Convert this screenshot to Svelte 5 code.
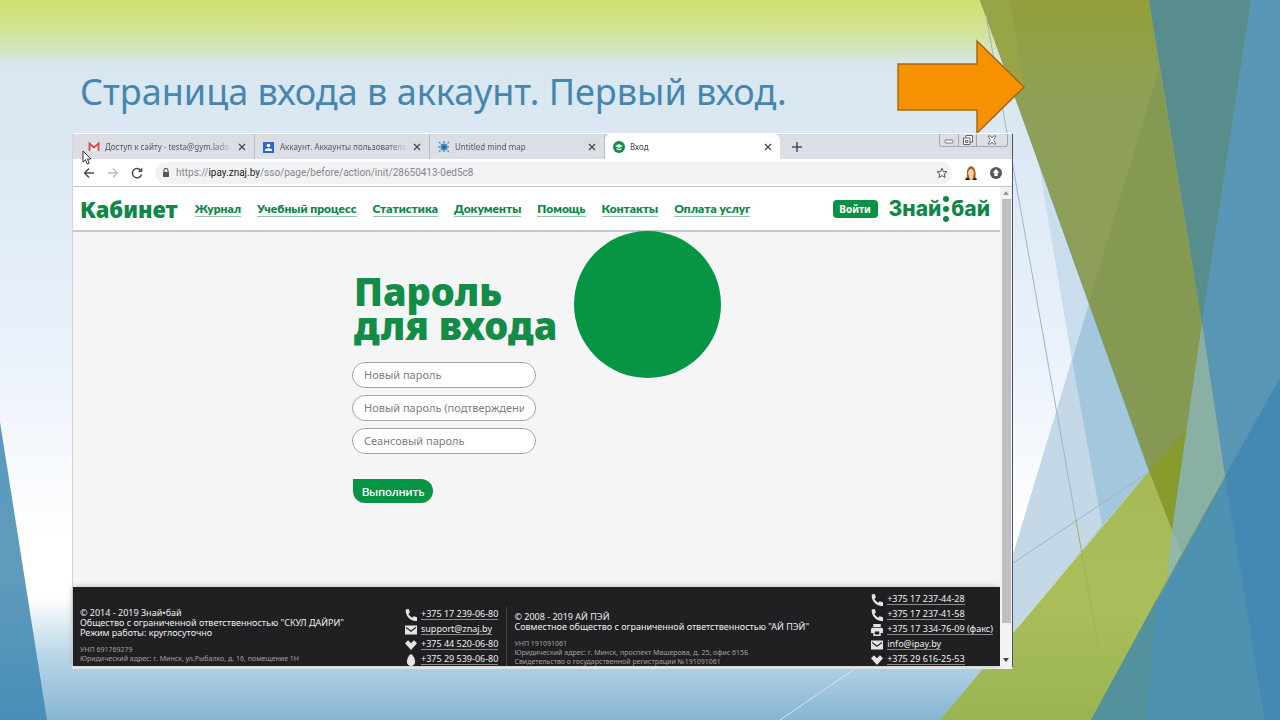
<script>
    let tabs = [
        { icon: 'gmail', title: 'Доступ к сайту - testa@gym.lado' },
        { icon: 'account', title: 'Аккаунт. Аккаунты пользователе' },
        { icon: 'mindmap', title: 'Untitled mind map' },
        { icon: 'znaj', title: 'Вход' }
    ];
    let active = 3;

    let menu = ['Журнал', 'Учебный процесс', 'Статистика', 'Документы', 'Помощь', 'Контакты', 'Оплата услуг'];

    let fields = [
        { id: 'new', label: 'Новый пароль' },
        { id: 'confirm', label: 'Новый пароль (подтверждение)' },
        { id: 'session', label: 'Сеансовый пароль' }
    ];

    let znajContacts = [
        { icon: 'phone', text: '+375 17 239-06-80' },
        { icon: 'mail', text: 'support@znaj.by' },
        { icon: 'velcom', text: '+375 44 520-06-80' },
        { icon: 'mts', text: '+375 29 539-06-80' }
    ];

    let ipayContacts = [
        { icon: 'phone', text: '+375 17 237-44-28' },
        { icon: 'phone', text: '+375 17 237-41-58' },
        { icon: 'fax', text: '+375 17 334-76-09 (факс)' },
        { icon: 'mail', text: 'info@ipay.by' },
        { icon: 'velcom', text: '+375 29 616-25-53' }
    ];

    let paths = {
        phone: 'M5 0 1 0.500C0 9 7 16 16 16l0-5-4.500-1.500-2 2C7.500 10.500 5.500 8.500 4.500 6.800l2-2z',
        mail: 'M0 2v12h16V2zm1.500 1.500L8 8.500l6.500-5v2L8 10.500 1.500 5.500z',
        velcom: 'M0 5.500l4-4 4 4 4-4 4 4-8 9z',
        mts: 'M8 0C4.500 2 2.500 7 2.500 10.500a5.500 5.500 0 0 0 11 0C13.500 7 11.500 2 8 0z',
        fax: 'M3 0h10v4H3zM2 5h12a2 2 0 0 1 2 2v5h-3v4H3v-4H0V7a2 2 0 0 1 2-2zm3 5v4h6v-4z'
    };
</script>

<main class="slide">
    <svg class="backdrop" viewBox="0 0 1280 720" preserveAspectRatio="none" aria-hidden="true">
        <defs>
            <linearGradient id="green" x1="0" y1="0" x2="0" y2="1">
                <stop offset="0" stop-color="#929f3a" />
                <stop offset=".2" stop-color="#8fa05a" />
                <stop offset="1" stop-color="#8a9a56" />
            </linearGradient>
            <linearGradient id="band" x1="0" y1="0" x2="0" y2="1">
                <stop offset="0" stop-color="#a5b955" />
                <stop offset=".5" stop-color="#aabf5c" />
                <stop offset="1" stop-color="#9bb452" />
            </linearGradient>
            <linearGradient id="side" x1="0" y1="0" x2="0" y2="1">
                <stop offset="0" stop-color="#5b9abf" />
                <stop offset=".5" stop-color="#5f9bbc" />
                <stop offset="1" stop-color="#488eb8" />
            </linearGradient>
        </defs>
        <polygon points="0,422 47,720 0,720" fill="url(#side)" />
        <polygon points="1038,160 1089,303 1072,360" fill="#c9ddec" />
        <polygon points="1089,303 1149,471 1013,632 1013,555 1072,360" fill="#a3c7dc" />
        <polygon points="1072,360 1102,525 1013,632 1013,555" fill="#c4d8e8" />
        <!-- shared ground, keeps the sky out of the facet seams -->
        <polygon points="980,0 1280,0 1280,720 941,720 1149,472" fill="#7a9f78" />
        <polygon points="980,0 1149,0 1202,323 1172,530" fill="url(#green)" />
        <polygon points="980,0 1010,0 1024,88 1012,88" fill="#97a447" />
        <polygon points="1159,68 1202,323 1172,530 1089,303" fill="#869952" />
        <polygon points="1149,471 1186,431 1172,530" fill="#899a2c" />
        <polygon points="1149,0 1251,0 1202,323" fill="#588d8e" />
        <polygon points="1251,0 1280,0 1280,380 1225,476 1202,323" fill="#5995b4" />
        <polygon points="1202,323 1225,476 1167,580 1172,530" fill="#8ab0a3" />
        <polygon points="1172,530 1182,553 1167,580" fill="#94b8aa" />
        <polygon points="1149,471 1172,530 1167,580 1091,720 940,720" fill="url(#band)" />
        <polygon points="1280,378 1280,720 1091,720" fill="#4e91b1" />
        <polygon points="1280,378 1280,720 1265,720 1225,476" fill="#4488b4" />
        <polygon points="1157,599 1146,720 1091,720" fill="#53929c" />
        <path d="M986 15 1076 520M1013 563 1149 472" fill="none" stroke="#a5b3c4" />
        <path d="M1076 520 1099 650" fill="none" stroke="#9fb15a" />
        <path d="M780 720 862 664" fill="none" stroke="#d3e5f0" />
    </svg>

    <header class="title-row">
        <h1>Страница входа в аккаунт. Первый вход.</h1>
        <svg class="arrow" width="128" height="96" viewBox="0 0 128 96" aria-hidden="true">
            <path d="M1 26H80V3L127 49 80 95V72H1z" fill="#f69200" stroke="#a8690f" stroke-width="1.500" />
        </svg>
    </header>

    <section class="browser">
        <div class="tab-strip">
            {#each tabs as tab, i}
                <button class="tab" class:active={i === active} on:click={() => (active = i)}>
                    <svg width="12" height="12" viewBox="0 0 12 12" aria-hidden="true">
                        {#if tab.icon === 'gmail'}
                            <path d="M1 2h10v8H1z" fill="#f3eeee" />
                            <path d="M1.500 10V2.500L6 6.500l4.500-4V10" fill="none" stroke="#d54b40" stroke-width="1.800" />
                        {:else if tab.icon === 'account'}
                            <rect x="0" y="1" width="11" height="11" fill="#2f66c8" />
                            <circle cx="5.500" cy="4.500" r="1.800" fill="#fff" />
                            <path d="M2 10V8.500Q5.500 5.800 9 8.500V10z" fill="#fff" />
                        {:else if tab.icon === 'mindmap'}
                            <path d="M1 1 11 11M11 1 1 11M0 6h12M6 0v12" stroke="#4f9cc4" stroke-width="1.500" stroke-dasharray="2 1" />
                            <circle cx="6" cy="6" r="3.500" fill="#3a8dbb" />
                            <circle cx="6" cy="6" r="1.500" fill="#1f648e" />
                        {:else}
                            <circle cx="6" cy="6" r="6" fill="#128a48" />
                            <path d="M2 5 6 3l4 2-4 2zM3.500 7v1.500q2.500 1.500 5 0V7L6 8z" fill="#e9f7ee" />
                        {/if}
                    </svg>
                    <span class="tab-title">{tab.title}</span>
                    <svg width="8" height="8" viewBox="0 0 8 8" aria-hidden="true">
                        <path d="M1 1 7 7M7 1 1 7" stroke="#4a4c50" stroke-width="1.400" />
                    </svg>
                </button>
            {/each}
            <button class="new-tab" aria-label="Новая вкладка">
                <svg width="10" height="10" viewBox="0 0 10 10"><path d="M5 0v10M0 5h10" stroke="#4a4c58" stroke-width="1.500" /></svg>
            </button>
            <div class="window-buttons">
                <button aria-label="Свернуть">
                    <svg width="10" height="10" viewBox="0 0 10 10"><rect x="1" y="5" width="8" height="3" rx="1" fill="#fff" stroke="#777" /></svg>
                </button>
                <button aria-label="Развернуть">
                    <svg width="10" height="10" viewBox="0 0 10 10"><path d="M3 3V.500h6.500V7H7M.500 3h6.500v6.500H.500zM2.500 5.500h2.500v2H2.500z" fill="#fff" stroke="#666" /></svg>
                </button>
                <button class="wide" aria-label="Закрыть">
                    <svg width="10" height="10" viewBox="0 0 10 10"><path d="M1 1h2.500L5 3 6.500 1H9L6.500 5 9 9H6.500L5 7 3.500 9H1l2.500-4z" fill="#fff" stroke="#777" /></svg>
                </button>
            </div>
        </div>

        <div class="toolbar">
            <button aria-label="Назад">
                <svg width="12" height="12" viewBox="0 0 12 12"><path d="M11 6H2M6 1.500 1.500 6 6 10.500" fill="none" stroke="#4d4f54" stroke-width="1.500" /></svg>
            </button>
            <button aria-label="Вперёд">
                <svg width="12" height="12" viewBox="0 0 12 12"><path d="M1 6h9M6 1.500 10.500 6 6 10.500" fill="none" stroke="#bbbdc2" stroke-width="1.300" /></svg>
            </button>
            <button aria-label="Обновить">
                <svg width="12" height="12" viewBox="0 0 12 12"><path d="M10 3.500A4.700 4.700 0 1 0 10.600 7.500" fill="none" stroke="#4d4f54" stroke-width="1.500" /><path d="M11.300.500V5H6.800z" fill="#4d4f54" /></svg>
            </button>
            <div class="address">
                <svg width="8" height="10" viewBox="0 0 8 10" aria-hidden="true"><path d="M2 4V2.500a2 2 0 0 1 4 0V4" fill="none" stroke="#55575c" stroke-width="1.200" /><rect x="1" y="4" width="6" height="5" fill="#55575c" /></svg>
                <span class="url">https://<b>ipay.znaj.by</b>/sso/page/before/action/init/28650413-0ed5c8</span>
                <svg width="12" height="12" viewBox="0 0 12 12" aria-hidden="true"><path d="M6 1.300 7.400 4.500l3.500.300-2.700 2.200.900 3.500L6 8.600 2.900 10.500l.900-3.500L1.100 4.800l3.500-.300z" fill="none" stroke="#55575c" /></svg>
            </div>
            <button aria-label="Профиль">
                <svg width="14" height="14" viewBox="0 0 14 14"><path d="M1 14q1-4 6-3.500 5-.500 6 3.500z" fill="#222" /><path d="M3 12Q2 1 7 0q5.500 1 4.500 11l-2 2z" fill="#a35f1c" /><path d="M4 6Q7-.500 10 6L9.500 9 8.500 14H6L4.500 9z" fill="#f5cfa0" /></svg>
            </button>
            <button aria-label="Обновление браузера">
                <svg width="12" height="12" viewBox="0 0 12 12"><circle cx="6" cy="6" r="6" fill="#55575c" /><path d="M6 2 9.500 5.800H7.700V9H4.300V5.800H2.500z" fill="#fff" /></svg>
            </button>
        </div>

        <div class="viewport">
            <div class="page">
                <nav class="site-nav">
                    <a class="home" href="#home">Кабинет</a>
                    <div class="links">
                        {#each menu as item}
                            <a href="#menu">{item}</a>
                        {/each}
                    </div>
                    <button class="login">Войти</button>
                    <a class="logo" href="#znaj">
                        <span>Знай</span>
                        <svg width="6" height="26" viewBox="0 0 6 26" aria-hidden="true">
                            <circle cx="3" cy="3" r="3" /><circle cx="3" cy="13" r="3" /><circle cx="3" cy="23" r="3" />
                        </svg>
                        <span>бай</span>
                    </a>
                </nav>

                <div class="content">
                    <form on:submit|preventDefault>
                        <h2>Пароль<br />для входа</h2>
                        {#each fields as field}
                            <input type="text" id={field.id} aria-label={field.label} placeholder={field.label} />
                        {/each}
                        <button class="submit">Выполнить</button>
                    </form>
                    <div class="circle"></div>
                </div>

                <footer>
                    <div class="company">
                        <p>© 2014 - 2019 Знай•бай<br />Общество с ограниченной ответственностью "СКУЛ ДАЙРИ"<br />Режим работы: круглосуточно</p>
                        <p class="legal">УНП 691769279<br />Юридический адрес: г. Минск, ул.Рыбалко, д. 16, помещение 1Н</p>
                    </div>
                    <ul class="contacts">
                        {#each znajContacts as c}
                            <li><svg width="12" height="12" viewBox="0 0 16 16" aria-hidden="true"><path d={paths[c.icon]} fill-rule="evenodd" /></svg><a href="#contact">{c.text}</a></li>
                        {/each}
                    </ul>
                    <div class="company second">
                        <p>© 2008 - 2019 АЙ ПЭЙ<br />Совместное общество с ограниченной ответственностью "АЙ ПЭЙ"</p>
                        <p class="legal">УНП 191091061<br />Юридический адрес: г. Минск, проспект Машерова, д. 25, офис 615Б<br />Свидетельство о государственной регистрации №191091061</p>
                    </div>
                    <ul class="contacts last">
                        {#each ipayContacts as c}
                            <li><svg width="12" height="12" viewBox="0 0 16 16" aria-hidden="true"><path d={paths[c.icon]} fill-rule="evenodd" /></svg><a href="#contact">{c.text}</a></li>
                        {/each}
                    </ul>
                </footer>
            </div>
            <div class="scrollbar">
                <svg width="6" height="4" viewBox="0 0 6 4"><path d="M0 4 3 0l3 4z" fill="#999" /></svg>
                <div class="thumb"></div>
                <svg width="6" height="4" viewBox="0 0 6 4"><path d="M0 0h6L3 4z" fill="#444" /></svg>
            </div>
        </div>

        <svg class="cursor" width="10" height="15" viewBox="0 0 10 15" aria-hidden="true">
            <path d="M1 1v11l2.500-2.300L5.200 14l2-.800L5.500 9H9z" fill="#fff" stroke="#333" />
        </svg>
    </section>
</main>

<style>
    :global(body) {
        margin: 0;
    }

    .slide {
        position: relative;
        box-sizing: border-box;
        display: flex;
        flex-direction: column;
        min-height: 100vh;
        padding: 38px 267px 51px 72px;
        overflow: hidden;
        background: linear-gradient(#cfe06e 0%, #d2e294 4%, #d5e5c4 7%, #d8e7ef 9%, #dbe8f4 20%, #edf3fb 53%, #fff 75%, #fff 83%, #b9d6e8 91%, #86b6d2 100%);
        font-family: "Noto Sans", sans-serif;
    }

    .backdrop {
        position: absolute;
        inset: 0;
        width: 100%;
        height: 100%;
    }

    .title-row {
        position: relative;
        display: flex;
        justify-content: space-between;
        height: 95px;
        margin-right: -12px;
    }

    h1 {
        margin: 0;
        padding: 27px 0 0 8px;
        font-size: 36px;
        font-weight: 400;
        line-height: 54px;
        white-space: nowrap;
        color: #4686ae;
    }

    .arrow {
        flex: none;
    }

    button {
        padding: 0;
        border: 0;
        background: none;
        font-family: inherit;
        cursor: pointer;
    }

    svg {
        flex: none;
        display: block;
    }

    a {
        color: inherit;
        text-decoration: none;
    }

    .browser {
        position: relative;
        flex: 1;
        display: flex;
        flex-direction: column;
        border: 1px solid #d0d4dc;
        border-top-color: #fff;
        border-right-color: #4a5263;
        border-bottom: 3px solid #f4f2f2;
        background: #fff;
    }

    .tab-strip {
        display: flex;
        height: 25px;
        padding-left: 7px;
        background: #dcdee6;
    }

    .tab {
        flex: 0 1 175px;
        min-width: 0;
        display: flex;
        align-items: center;
        gap: 5px;
        padding: 0 8px;
        border-right: 1px solid #b9bcc6;
        font-size: 8px;
        color: #55575e;
    }

    .tab.active {
        border-right: 0;
        border-radius: 6px 6px 0 0;
        background: #fff;
        color: #3c3e44;
    }

    .tab-title {
        flex: 1;
        overflow: hidden;
        text-align: left;
        white-space: nowrap;
        mask-image: linear-gradient(90deg, #000 85%, transparent);
    }

    .new-tab {
        padding: 0 12px;
    }

    .window-buttons {
        display: flex;
        height: 12px;
        margin: 0 4px 0 auto;
        border: 1px solid #a6a8b0;
        border-top: 0;
        border-radius: 0 0 3px 3px;
    }

    .window-buttons button {
        display: grid;
        place-items: center;
        width: 18px;
    }

    .window-buttons button + button {
        border-left: 1px solid #a6a8b0;
    }

    .window-buttons .wide {
        width: 31px;
    }

    .toolbar {
        display: flex;
        align-items: center;
        gap: 12px;
        height: 27px;
        padding: 0 10px;
        border-bottom: 1px solid #c3c3cb;
    }

    .address {
        flex: 1;
        display: flex;
        align-items: center;
        gap: 6px;
        height: 22px;
        padding: 0 4px 0 7px;
        border-radius: 11px;
        background: #f1f2f4;
    }

    .url {
        flex: 1;
        overflow: hidden;
        font-family: Roboto, sans-serif;
        font-size: 10px;
        white-space: nowrap;
        color: #85878c;
    }

    .url b {
        font-weight: 400;
        color: #222;
    }

    .viewport {
        flex: 1;
        display: flex;
    }

    .page {
        flex: 1;
        min-width: 0;
        display: flex;
        flex-direction: column;
        background: #f5f5f6;
    }

    .site-nav {
        display: flex;
        align-items: center;
        height: 43px;
        padding: 0 10px 0 7px;
        border-bottom: 2px solid #c6c8cc;
        background: #fff;
        color: #0f8746;
    }

    .home {
        font-size: 22px;
        font-weight: 900;
        line-height: 28px;
    }

    .links {
        flex: 1;
        display: flex;
        gap: 16px;
        margin-left: 17px;
        font-family: Lato, sans-serif;
        font-size: 12px;
        font-weight: 800;
        line-height: 15px;
        white-space: nowrap;
    }

    .links a {
        border-bottom: 1px solid #8fc5a7;
    }

    .login {
        width: 45px;
        height: 18px;
        border-radius: 4px;
        background: #0a9146;
        font-size: 10px;
        font-weight: 700;
        color: #fff;
    }

    .logo {
        display: flex;
        align-items: center;
        gap: 2px;
        margin-left: 11px;
        font-family: Inter, sans-serif;
        font-size: 21px;
        font-weight: 800;
        fill: #0f8746;
    }

    .content {
        flex: 1;
        display: flex;
        justify-content: center;
        align-items: flex-start;
        gap: 18px;
    }

    form {
        width: 204px;
        padding-top: 42px;
    }

    h2 {
        margin: 0 0 20px 2px;
        font-size: 38px;
        font-weight: 900;
        line-height: 34px;
        white-space: nowrap;
        color: #128c46;
    }

    input {
        display: block;
        box-sizing: border-box;
        width: 184px;
        height: 26px;
        margin-bottom: 7px;
        padding: 0 11px 2px;
        border: 1px solid #a5a5a8;
        border-radius: 13px;
        background: #fff;
        font-family: "Noto Sans", sans-serif;
        font-size: 11px;
    }

    input::placeholder {
        color: #7d7d80;
    }

    .submit {
        width: 80px;
        height: 24px;
        margin: 18px 0 0 1px;
        border-radius: 0 12px 12px 12px;
        background: #069445;
        font-family: Lato, sans-serif;
        font-size: 12px;
        font-weight: 600;
        color: #fff;
    }

    .circle {
        flex: none;
        width: 147px;
        height: 147px;
        margin-top: -1px;
        border-radius: 50%;
        background: #069445;
    }

    footer {
        display: flex;
        box-sizing: border-box;
        height: 79px;
        padding: 7px 7px 0;
        overflow: hidden;
        background: #202022;
        box-shadow: 0 0 6px #b5b5b5;
        font-size: 9px;
        line-height: 10px;
        white-space: nowrap;
        color: #efefef;
    }

    footer p {
        margin: 0;
    }

    .company {
        flex: 0 1 325px;
        min-width: 0;
        padding-top: 14px;
    }

    .second {
        flex: 1 1 350px;
        margin: 13px 0 0 8px;
        padding: 5px 0 0 7px;
        border-left: 1px solid #45454a;
    }

    footer .legal {
        margin-top: 7px;
        font-size: 7px;
        line-height: 9px;
        color: #a0a0a0;
    }

    .contacts {
        flex: none;
        display: grid;
        align-content: start;
        gap: 4px;
        margin: 0;
        padding: 15px 0 0;
        list-style: none;
        fill: #e4e4e4;
    }

    .last {
        padding-top: 0;
    }

    .contacts li {
        display: flex;
        align-items: center;
        gap: 4px;
        height: 11px;
    }

    .contacts a {
        border-bottom: 1px solid #8b8b8b;
    }

    .scrollbar {
        display: flex;
        flex-direction: column;
        align-items: center;
        gap: 4px;
        width: 12px;
        padding: 4px 0;
        background: #f3f3f4;
    }

    .thumb {
        width: 9px;
        height: 424px;
        margin-bottom: auto;
        background: #bfbfc1;
    }

    .cursor {
        position: absolute;
        left: 9px;
        top: 16px;
    }
</style>
